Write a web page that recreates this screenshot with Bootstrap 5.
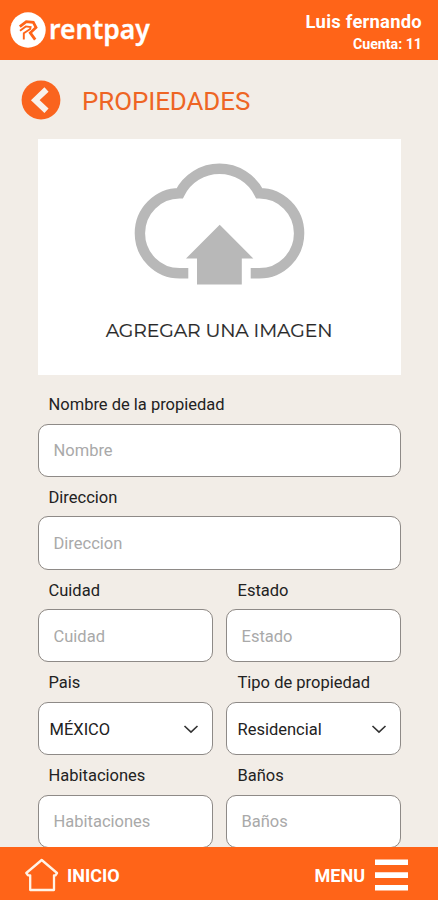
<!DOCTYPE html>
<html lang="es">
<head>
<meta charset="utf-8">
<meta name="viewport" content="width=device-width, initial-scale=1">
<title>Rentpay - Propiedades</title>
<link href="https://cdn.jsdelivr.net/npm/bootstrap@5.3.0/dist/css/bootstrap.min.css" rel="stylesheet">
<style>
:root { --brand: #ff6418; }
body { font-family: Roboto, "Liberation Sans", sans-serif; background: #f2ede7; color: #282828; height: 900px; }
svg { display: block; flex-shrink: 0; }
.topbar { background: var(--brand); height: 60px; padding: 0 16px 0 10px; }
.brand-name { font-family: "Noto Sans", sans-serif; font-weight: 600; font-size: 26.5px; line-height: 36px; letter-spacing: 0; margin: -3px 0 0 3px; -webkit-text-stroke: .3px #fff; }
.user-name { font-size: 18.4px; line-height: 22px; letter-spacing: .25px; padding-top: 2px; }
.user-account { font-size: 14.2px; line-height: 22px; }
.heading-row { height: 79px; padding: 1px 0 0 21px; gap: 21px; }
.page-title { color: #ee6524; font-size: 25.9px; line-height: 30px; font-weight: 400; letter-spacing: -.06px; padding-top: 1px; }
.content { padding: 0 37.5px; }
.uploader { height: 236px; padding-top: 24px; margin-bottom: 9px; }
.uploader-text { font-family: Montserrat, Lato, sans-serif; font-size: 18.8px; line-height: 24px; margin-top: 34px; letter-spacing: -.08px; -webkit-text-stroke: .2px #282828; }
.field { height: 92.8px; }
.field .form-label { font-size: 16.5px; line-height: 42px; height: 39.5px; padding-left: 11px; margin: 0; color: #222; }
.field .form-control, .field .form-select { height: 53.3px; border: 1px solid #8e8a87; border-radius: 10px; background-color: #fff; font-size: 16.5px; color: #222; padding: 1px 15px 0; }
.field .form-control::placeholder { color: #a9a9a9; }
.field .form-select { padding: 3px 30px 0 11px; background-position: right 13px center; background-size: 16px 16px; background-image: url("data:image/svg+xml,%3csvg xmlns='http://www.w3.org/2000/svg' viewBox='0 0 16 16'%3e%3cpath fill='none' stroke='%23333' stroke-width='1.6' d='M1.5 5 8 11.2 14.5 5'/%3e%3c/svg%3e"); }
.pair { --bs-gutter-x: 13px; }
.pair .col-6:nth-child(even) .form-label { padding-left: 12px; }
.bottombar { background: var(--brand); height: 53px; padding: 3px 30px 0 25px; font-size: 18px; }
</style>
<script src="https://cdn.jsdelivr.net/npm/bootstrap@5.3.0/dist/js/bootstrap.bundle.min.js"></script>
</head>
<body class="d-flex flex-column overflow-hidden">
<header class="topbar d-flex justify-content-between align-items-center text-white flex-shrink-0">
  <div class="d-flex align-items-center">
    <svg width="36" height="36" viewBox="0 0 36 36" fill="none" stroke-linejoin="miter">
      <circle cx="18" cy="18" r="17.7" fill="#fff"/>
      <path d="M9.8 14.6 L16.3 9.6 L23.3 10.4 L26 15.4 L20.3 20.8 L25.2 27.6" stroke="#ff6418" stroke-width="2.8"/>
      <path d="M10 18.8 L15.8 14.4 L20.6 15 L20.2 17 L13.8 21.2 V27.4" stroke="#ff6418" stroke-width="1.9"/>
    </svg>
    <div class="brand-name">rentpay</div>
  </div>
  <div class="text-end fw-bold pt-1">
    <div class="user-name">Luis fernando</div>
    <div class="user-account">Cuenta: 11</div>
  </div>
</header>

<main class="flex-grow-1 overflow-hidden">
  <div class="heading-row d-flex align-items-center">
    <svg width="40" height="40" viewBox="0 0 40 40" fill="none">
      <circle cx="20" cy="20" r="19.4" fill="#fa641e"/>
      <path d="M25.5 9.5 L14.3 20.2 L25.5 30.8" stroke="#f8f2ec" stroke-width="6"/>
    </svg>
    <h1 class="page-title mb-0">PROPIEDADES</h1>
  </div>
  <div class="content">
    <div class="uploader bg-white d-flex flex-column align-items-center">
      <svg width="171" height="122" viewBox="134 163 171 122">
        <path d="M188.3 273.3 H179.7 A39.8 40 0 0 1 179.7 193.3 A44.5 44.5 0 0 1 259.3 193.3 A39.8 40 0 0 1 259.3 273.3 H250.7" fill="none" stroke="#b8b8b8" stroke-width="10.4"/>
        <path d="M219.7 224.7 L253.3 258.5 H241.8 V284.4 H197 V258.5 H186 Z" fill="#b8b8b8"/>
      </svg>
      <div class="uploader-text">AGREGAR UNA IMAGEN</div>
    </div>
    <form>
      <div class="field"><label class="form-label d-block" for="nombre">Nombre de la propiedad</label><input class="form-control" id="nombre" placeholder="Nombre"></div>
      <div class="field"><label class="form-label d-block" for="direccion">Direccion</label><input class="form-control" id="direccion" placeholder="Direccion"></div>
      <div class="row pair">
        <div class="col-6 field"><label class="form-label d-block" for="cuidad">Cuidad</label><input class="form-control" id="cuidad" placeholder="Cuidad"></div>
        <div class="col-6 field"><label class="form-label d-block" for="estado">Estado</label><input class="form-control" id="estado" placeholder="Estado"></div>
        <div class="col-6 field"><label class="form-label d-block" for="pais">Pais</label><select class="form-select" id="pais"><option>MÉXICO</option></select></div>
        <div class="col-6 field"><label class="form-label d-block" for="tipo">Tipo de propiedad</label><select class="form-select" id="tipo"><option>Residencial</option></select></div>
        <div class="col-6 field"><label class="form-label d-block" for="habitaciones">Habitaciones</label><input class="form-control" id="habitaciones" placeholder="Habitaciones"></div>
        <div class="col-6 field"><label class="form-label d-block" for="banos">Baños</label><input class="form-control" id="banos" placeholder="Baños"></div>
      </div>
    </form>
  </div>
</main>

<nav class="bottombar d-flex justify-content-between align-items-center text-white fw-bold flex-shrink-0">
  <div class="d-flex align-items-center">
    <svg width="34" height="34" viewBox="0 0 34 34" fill="none" stroke="#fff3e6" stroke-width="2.3" stroke-linejoin="round">
      <path d="M16.7 2 L32 15 L30.5 17.3 H29 V32 H5.2 V17.3 H3 L1.3 15 Z"/>
    </svg>
    <span class="ms-2">INICIO</span>
  </div>
  <div class="d-flex align-items-center">
    <span>MENU</span>
    <svg class="ms-2" width="35" height="34" viewBox="0 0 35 34" fill="#fff">
      <path d="M2 1.5h33v5.6H2zM2 14.3h33v5.6H2zM2 27h33v5.6H2z"/>
    </svg>
  </div>
</nav>
</body>
</html>
